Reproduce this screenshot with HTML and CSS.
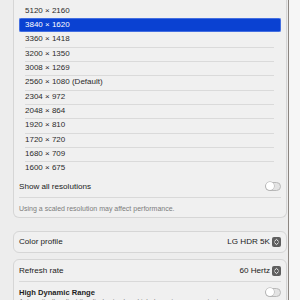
FILE: index.html
```html
<!DOCTYPE html>
<html>
<head>
<meta charset="utf-8">
<link rel="stylesheet" href="styles.css">
</head>
<body>
<div class="main">
  <div class="card list-card">
    <div class="list">
      <div class="res">5120 × 2160</div>
      <div class="res selected">3840 × 1620</div>
      <div class="res">3360 × 1418</div>
      <div class="res sep">3200 × 1350</div>
      <div class="res sep">3008 × 1269</div>
      <div class="res sep">2560 × 1080 (Default)</div>
      <div class="res sep">2304 × 972</div>
      <div class="res sep">2048 × 864</div>
      <div class="res sep">1920 × 810</div>
      <div class="res sep">1720 × 720</div>
      <div class="res sep">1680 × 709</div>
      <div class="res sep">1600 × 675</div>
    </div>
    <div class="row showall">
      <span class="label">Show all resolutions</span>
      <span class="toggle"><span class="knob"></span></span>
    </div>
    <div class="caption">Using a scaled resolution may affect performance.</div>
  </div>

  <div class="card">
    <div class="row">
      <span class="label">Color profile</span>
      <span class="value">LG HDR 5K
        <svg class="stepper" width="9" height="10" viewBox="0 0 9 10"><rect x="0" y="0" width="9" height="10" rx="2" fill="#5e5e5e"/><path d="M2.7 4.1 L4.5 2.4 L6.3 4.1 M2.7 5.9 L4.5 7.6 L6.3 5.9" fill="none" stroke="#fff" stroke-width="0.9" stroke-linecap="round" stroke-linejoin="round"/></svg>
      </span>
    </div>
  </div>

  <div class="card card3">
    <div class="row">
      <span class="label">Refresh rate</span>
      <span class="value">60 Hertz
        <svg class="stepper" width="9" height="10" viewBox="0 0 9 10"><rect x="0" y="0" width="9" height="10" rx="2" fill="#5e5e5e"/><path d="M2.7 4.1 L4.5 2.4 L6.3 4.1 M2.7 5.9 L4.5 7.6 L6.3 5.9" fill="none" stroke="#fff" stroke-width="0.9" stroke-linecap="round" stroke-linejoin="round"/></svg>
      </span>
    </div>
    <div class="row hdr">
      <div class="hdr-text">
        <div class="label strong">High Dynamic Range</div>
        <div class="sub">Automatically adjust the display to show high dynamic range content.</div>
      </div>
      <span class="toggle"><span class="knob"></span></span>
    </div>
  </div>
</div>
<div class="divider"></div>
<div class="side"></div>
</body>
</html>
```

FILE: styles.css
```css
html, body {
  margin: 0;
  padding: 0;
}
body {
  width: 300px;
  height: 300px;
  overflow: hidden;
  display: flex;
  font-family: "Liberation Sans", Arial, sans-serif;
  color: #262626;
  background: #ededed;
}
.main {
  width: 288px;
  height: 300px;
  box-sizing: border-box;
  padding: 0 1px 0 13px;
  background: #ededed;
  overflow: hidden;
  flex: none;
}
.divider {
  width: 1px;
  background: #8c8681;
  flex: none;
}
.side {
  flex: 1;
  background: #f6f6f6;
}
.card {
  background: #f0f0f0;
  border: 1px solid #d6d6d6;
  border-radius: 6px;
  margin-bottom: 6px;
}
.list-card {
  border-top: none;
  border-radius: 0 0 6px 6px;
  margin-bottom: 13px;
}
.list {
  padding: 3.67px 5px 0 5px;
}
.res {
  height: 14.33px;
  line-height: 14.33px;
  padding-left: 6px;
  font-size: 8px;
  color: #2b2b2b;
  box-sizing: border-box;
}
.res.sep {
  background: linear-gradient(#dadada, #dadada) no-repeat 6px 0 / calc(100% - 13px) 1px;
}
.res.selected {
  background: #0a41d2;
  color: #fff;
  border-radius: 2px;
  box-shadow: inset 0 0 0 0.5px #7f9ef0;
}
.row {
  display: flex;
  align-items: center;
  justify-content: space-between;
  height: 20px;
  padding: 0 5px;
}
.showall {
  height: 21.33px;
}
.label {
  font-size: 8.1px;
  color: #222;
}
.caption {
  margin: 0 5px;
  border-top: 1px solid #d9d9d9;
  height: 19px;
  line-height: 21px;
  font-size: 7px;
  color: #7c7c7c;
}
.value {
  display: flex;
  align-items: center;
  gap: 2px;
  font-size: 8.1px;
  color: #222;
}
.stepper {
  display: block;
  margin-top: 1px;
}
.card3 .row:first-child {
  height: 21px;
}
.card3 .row:first-child {
  border-bottom: 1px solid #d9d9d9;
  margin: 0 5px;
  padding: 0;
}
.hdr {
  align-items: flex-start;
  height: 30px;
}
.hdr-text {
  padding-top: 6px;
}
.strong {
  font-weight: bold;
  font-size: 7.6px;
  color: #1e1e1e;
  line-height: 10px;
}
.sub {
  font-size: 6.6px;
  color: #7c7c7c;
  line-height: 8px;
}
.hdr .toggle {
  margin-top: 6px;
}
.toggle {
  display: flex;
  align-items: center;
  width: 16px;
  height: 9px;
  box-sizing: border-box;
  border: 1px solid #b8b8b8;
  border-radius: 5px;
  background: #e3e3e3;
  flex: none;
}
.knob {
  width: 8px;
  height: 8px;
  margin-left: -0.5px;
  border-radius: 50%;
  background: #fff;
  box-shadow: 0 0 0 0.5px #a8a8a8;
}
```
